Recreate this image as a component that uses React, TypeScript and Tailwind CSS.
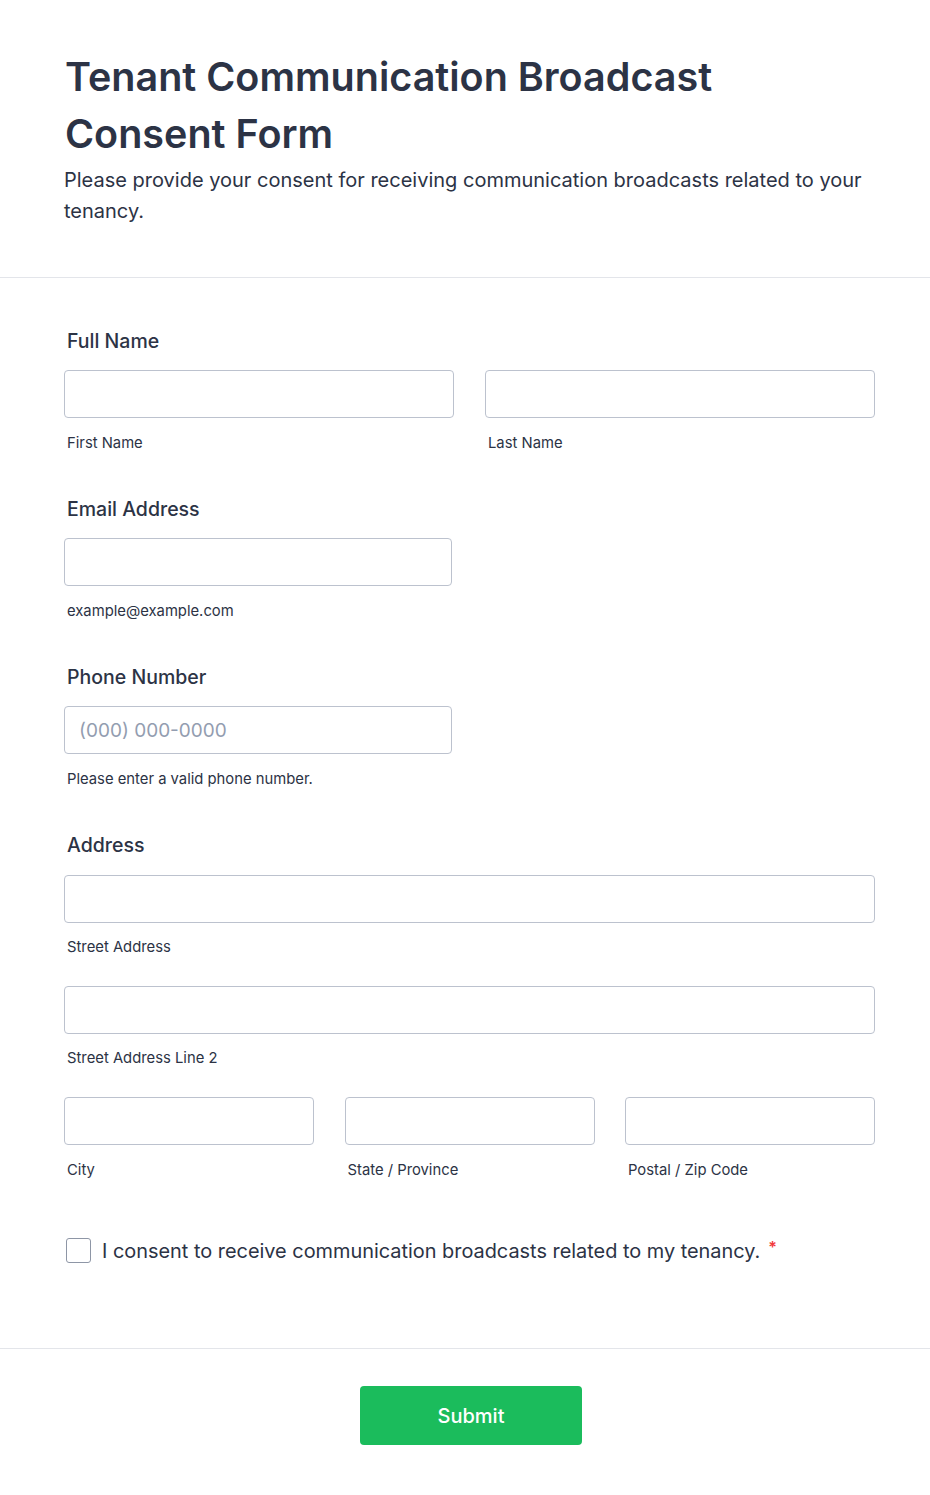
import React from "react";

const inputCls =
  "block h-[48px] w-full rounded-[4px] border border-[#bcc2ce] bg-white px-[14px] text-[19px] text-[#2c3345] placeholder:text-[#939db0] outline-none";

function Sub({ children, className = "mt-[16px]" }: { children: React.ReactNode; className?: string }) {
  return (
    <div className={"pl-[3px] text-[14.8px] leading-[18px] text-[#2c3345] " + className}>
      {children}
    </div>
  );
}

function Label({ children, className = "mb-[17px]" }: { children: React.ReactNode; className?: string }) {
  return (
    <div className={"pl-[3px] text-[19.5px] font-medium leading-[24px] text-[#2c3345] " + className}>
      {children}
    </div>
  );
}

export default function App() {
  return (
    <div
      className="min-h-[1495px] w-[930px] bg-white text-[#2c3345]"
      style={{ fontFamily: "Inter, 'Noto Sans', sans-serif" }}
    >
      <header className="border-b border-[#e3e5ea] pl-[64px] pr-[60px] pt-[49px] pb-[50px]">
        <h1 className="pl-[1px] text-[39.5px] font-semibold leading-[57px] text-[#2c3345]">
          Tenant Communication Broadcast
          <br />
          Consent Form
        </h1>
        <p className="mt-[2px] text-[20px] font-normal leading-[31px] text-[#2c3345]">
          Please provide your consent for receiving communication broadcasts related to your tenancy.
        </p>
      </header>

      <main className="pl-[64px] pr-[55px] pt-[51px]">
        <section>
          <Label>Full Name</Label>
          <div className="grid grid-cols-2 gap-[31px]">
            <div>
              <input className={inputCls} />
              <Sub>First Name</Sub>
            </div>
            <div>
              <input className={inputCls} />
              <Sub>Last Name</Sub>
            </div>
          </div>
        </section>

        <section className="mt-[45px]">
          <Label>Email Address</Label>
          <div className="w-[388px]">
            <input className={inputCls} />
            <Sub>example@example.com</Sub>
          </div>
        </section>

        <section className="mt-[45px]">
          <Label>Phone Number</Label>
          <div className="w-[388px]">
            <input className={inputCls} placeholder="(000) 000-0000" />
            <Sub>Please enter a valid phone number.</Sub>
          </div>
        </section>

        <section className="mt-[45px]">
          <Label className="mb-[18px]">Address</Label>
          <input className={inputCls} />
          <Sub className="mt-[15px]">Street Address</Sub>
          <input className={inputCls + " mt-[30px]"} />
          <Sub className="mt-[15px]">Street Address Line 2</Sub>
          <div className="mt-[30px] grid grid-cols-3 gap-[30.5px]">
            <div>
              <input className={inputCls} />
              <Sub>City</Sub>
            </div>
            <div>
              <input className={inputCls} />
              <Sub>State / Province</Sub>
            </div>
            <div>
              <input className={inputCls} />
              <Sub>Postal / Zip Code</Sub>
            </div>
          </div>
        </section>

        <section className="mt-[59px] flex items-center pl-[2px]">
          <span className="block h-[25px] w-[25px] shrink-0 rounded-[3px] border-[1.5px] border-[#8e96a6] bg-white" />
          <span className="ml-[11px] text-[19.9px] leading-[24px] text-[#2c3345]">
            I consent to receive communication broadcasts related to my tenancy.
          </span>
          <span className="ml-[8px] -mt-[8px] text-[16px] font-semibold leading-[16px] text-[#f23a3c]">*</span>
        </section>
      </main>

      <footer className="mt-[85px] border-t border-[#e3e5ea] pt-[37px]">
        <div className="flex justify-center pl-[12px]">
          <button className="h-[59px] w-[222px] rounded-[4px] bg-[#1bbc5c] text-[20px] font-medium text-white">
            Submit
          </button>
        </div>
      </footer>
    </div>
  );
}
